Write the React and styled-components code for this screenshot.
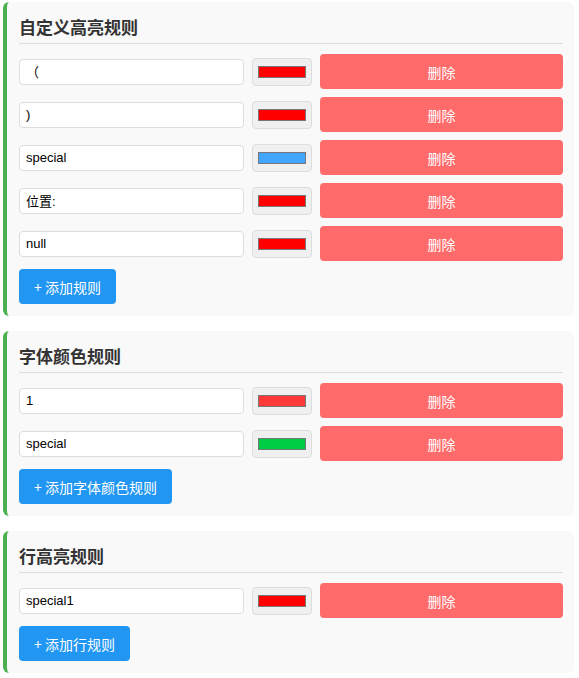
import React from 'react';
import styled, { createGlobalStyle } from 'styled-components';

const GlobalStyle = createGlobalStyle`
  body {
    margin: 0;
    background: #fff;
    font-family: "Liberation Sans", Arial, "Noto Sans CJK SC", sans-serif;
  }
`;

const sections = [
  {
    title: '自定义高亮规则',
    add: '+ 添加规则',
    rules: [
      { text: '（', color: '#ff0000' },
      { text: ')', color: '#ff0000' },
      { text: 'special', color: '#42a5ff' },
      { text: '位置:', color: '#ff0000' },
      { text: 'null', color: '#ff0000' },
    ],
  },
  {
    title: '字体颜色规则',
    add: '+ 添加字体颜色规则',
    rules: [
      { text: '1', color: '#ff3838' },
      { text: 'special', color: '#00cc44' },
    ],
  },
  {
    title: '行高亮规则',
    add: '+ 添加行规则',
    rules: [{ text: 'special1', color: '#ff0000' }],
  },
];

const App = () => {
  return (
    <Page>
      <GlobalStyle />
      {sections.map((s) => (
        <Card key={s.title}>
          <Title>{s.title}</Title>
          <RuleList>
            {s.rules.map((r, i) => (
              <Row key={i}>
                <TextInput type="text" defaultValue={r.text} />
                <ColorButton type="button">
                  <Swatch $color={r.color} />
                </ColorButton>
                <DeleteButton type="button">删除</DeleteButton>
              </Row>
            ))}
            <AddButton type="button">{s.add}</AddButton>
          </RuleList>
        </Card>
      ))}
    </Page>
  );
};

const Page = styled.div`
  display: flex;
  flex-direction: column;
  gap: 15px;
  padding: 2px 5px 0 3px;
`;

const Card = styled.div`
  background: #f9f9f9;
  border-left: 4px solid #4caf50;
  border-radius: 6px;
  padding: 12px 11px 12px 12px;
`;

const Title = styled.h3`
  margin: 0 0 10px;
  padding-bottom: 4px;
  border-bottom: 1px solid #ddd;
  font-size: 17px;
  line-height: 25px;
  font-weight: bold;
  color: #333;
  font-family: "Noto Sans CJK SC", "Liberation Sans", sans-serif;
`;

const RuleList = styled.div`
  display: flex;
  flex-direction: column;
  align-items: flex-start;
  gap: 8px;
`;

const Row = styled.div`
  display: flex;
  align-items: center;
  gap: 8px;
  width: 100%;
`;

const TextInput = styled.input`
  box-sizing: border-box;
  width: 225px;
  height: 26px;
  padding: 0 6px;
  border: 1px solid #ddd;
  border-radius: 4px;
  background: #fff;
  font-size: 13px;
  color: #000;
  font-family: "Liberation Sans", Arial, "Noto Sans CJK SC", sans-serif;
  outline: none;
`;

const ColorButton = styled.button`
  box-sizing: border-box;
  width: 60px;
  height: 28px;
  padding: 0;
  display: flex;
  align-items: center;
  justify-content: center;
  background: #f0f0f0;
  border: 1px solid #ddd;
  border-radius: 4px;
`;

const Swatch = styled.span`
  display: block;
  box-sizing: border-box;
  width: 48px;
  height: 12px;
  background: ${(p) => p.$color};
  border: 1px solid #777;
`;

const DeleteButton = styled.button`
  flex: 1;
  height: 35px;
  border: none;
  border-radius: 4px;
  background: #ff6b6b;
  color: #fff;
  font-size: 14px;
  font-family: "Noto Sans CJK SC", "Liberation Sans", sans-serif;
  cursor: pointer;
`;

const AddButton = styled.button`
  height: 35px;
  padding: 0 15px;
  border: none;
  border-radius: 4px;
  background: #2196f3;
  color: #fff;
  font-size: 14px;
  font-family: "Noto Sans CJK SC", "Liberation Sans", sans-serif;
  cursor: pointer;
`;

export default App;
